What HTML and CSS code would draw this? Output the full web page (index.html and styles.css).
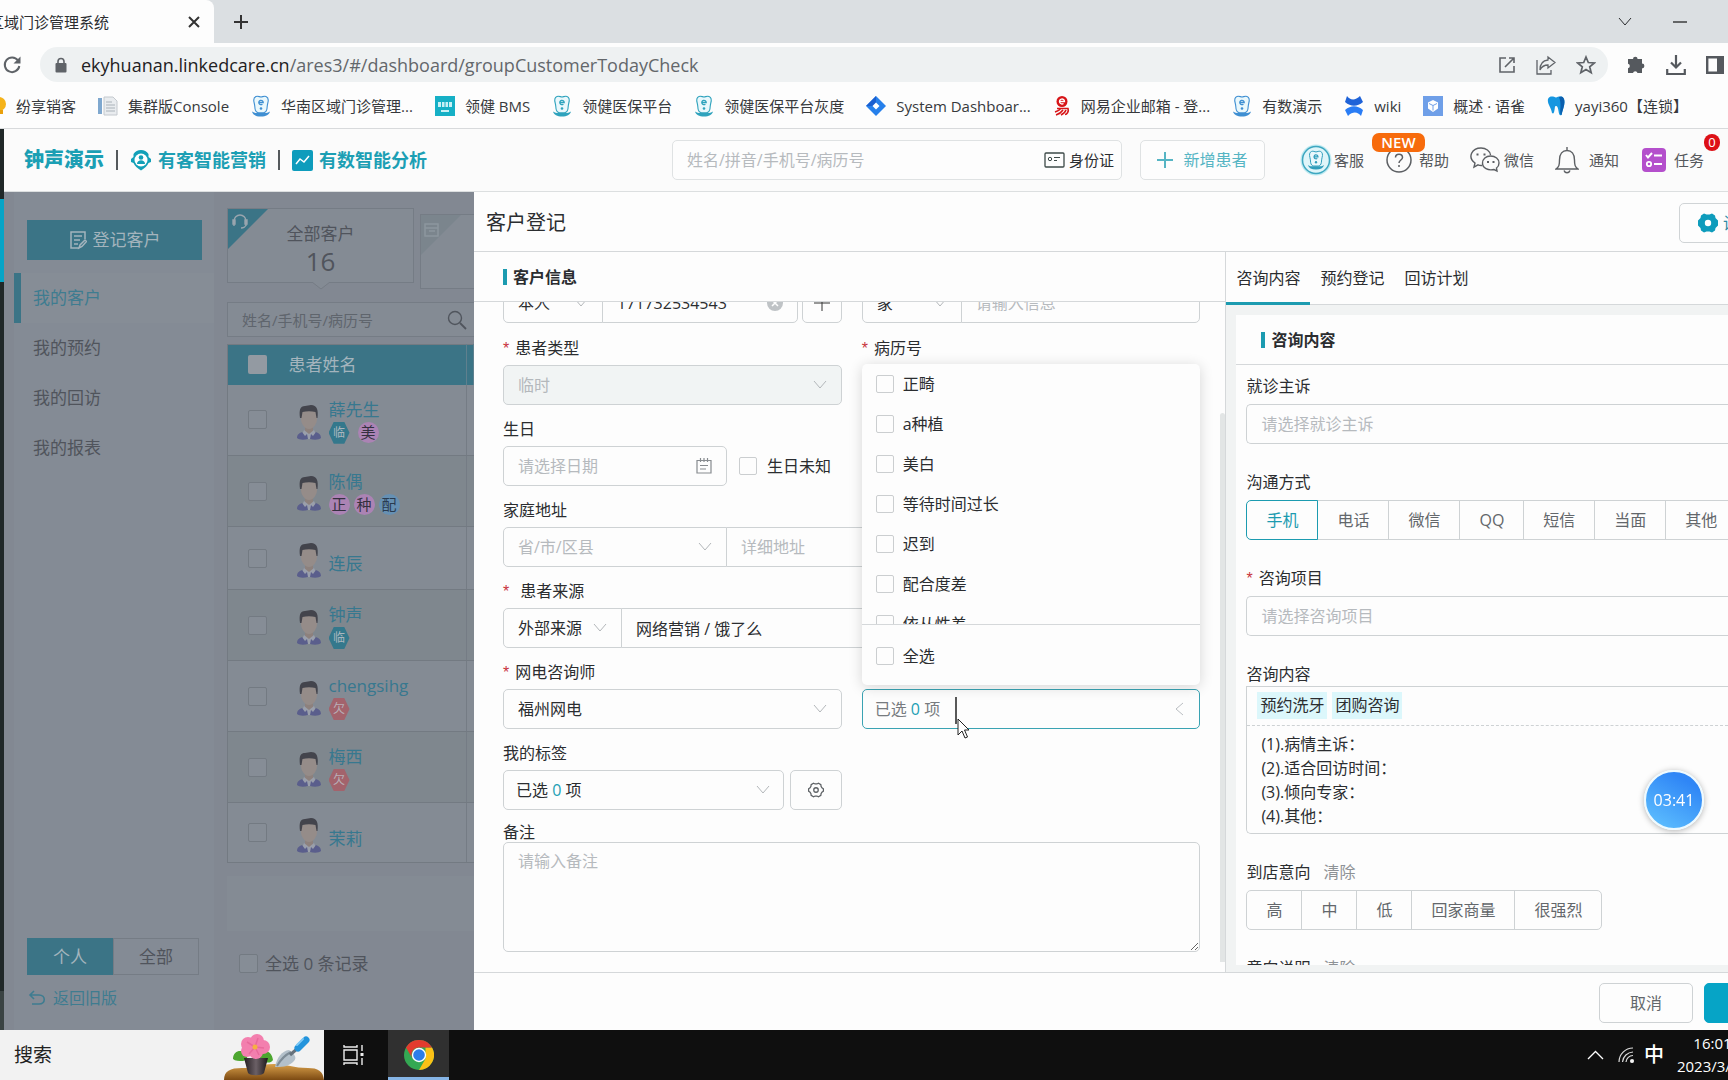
FILE: index.html
```html
<!DOCTYPE html>
<html lang="zh-CN">
<head>
<meta charset="utf-8">
<title>区域门诊管理系统</title>
<link rel="stylesheet" href="styles.css">
</head>
<body>
<svg class="defs" aria-hidden="true">
  <symbol id="chevron" viewBox="0 0 14 10"><path d="M1 1l6 7 6-7" fill="none" stroke="currentColor"/></symbol>
  <symbol id="tooth" viewBox="0 0 20 22"><path d="M5 1.500c2-.8 3.500.5 5 .5s3-1.300 5-.5c2.500 1 2.500 4 1.800 6.500-.6 2.200-.6 3.500-.8 5.500-.3 3-2 4-3.500 4.200h-5C6 17.500 4.300 16.500 4 13.500c-.2-2-.2-3.300-.8-5.500C2.500 5.500 2.500 2.500 5 1.500z" fill="#eaf8fc" stroke="currentColor" stroke-width="1.100"/><path d="M8 7.500h4.200a2.200 2.200 0 1 0-.8 1.700" fill="none" stroke="currentColor" stroke-width="1.300"/><circle cx="10" cy="13.500" r="1.300" fill="currentColor"/><path d="M1 16.500c3 2 5 1.500 9 1.500s6 .5 9-1.500c-1 3.500-4 5-9 5s-8-1.500-9-5z" fill="currentColor"/></symbol>
  <symbol id="man" viewBox="0 0 36 40"><path d="M14 25h8v6l-4 3-4-3z" fill="#8d817d"/><path d="M13 29l-4 9h18l-4-9-5 4z" fill="#9a9fab"/><path d="M6 37c0-4 3-5 5-6l3 4 2-2 1 5c-4 1-9 1-11-1zM30 37c0-4-3-5-5-6l-3 4-2-2-1 5c4 1 9 1 11-1z" fill="#5a5e8c"/><path d="M10 11c0-5 16-5 16 0v7c0 5-4 10-8 10s-8-5-8-10z" fill="#958c89"/><path d="M9 17c-1-8 0-12 5-12l6-1c6 0 7.500 5 6.500 13h-1l-1-6c-4-1-9-1-13 0l-1 6z" fill="#43444c"/></symbol>
  <symbol id="gear" viewBox="0 0 20 20"><path d="M7.300 2.500L9 3.300h2l1.700-.8 2.700 1.500.2 1.900 1 1.700 1.600 1.100v2.600l-1.600 1.100-1 1.700-.2 1.900-2.700 1.500-1.700-.8H9l-1.700.8L4.600 16l-.2-1.900-1-1.700-1.600-1.100V8.700l1.600-1.100 1-1.700.2-1.900z" fill="none" stroke="currentColor" stroke-width="1.400"/><circle cx="10" cy="10" r="2.500" fill="none" stroke="currentColor" stroke-width="1.400"/></symbol>
</svg>

<div class="tabstrip">
  <div class="tab">
    <div class="tab-title"><span>区域门诊管理系统</span></div>
    <button class="bare" aria-label="关闭标签页"><svg width="12" height="12" viewBox="0 0 12 12"><path d="M1 1l10 10M11 1L1 11" stroke="#333" stroke-width="2"/></svg></button>
  </div>
  <button class="bare new-tab" aria-label="新标签页"><svg width="16" height="16" viewBox="0 0 16 16"><path d="M8 1v14M1 8h14" stroke="#333" stroke-width="2"/></svg></button>
  <button class="bare" aria-label="搜索标签页"><svg width="14" height="10"><use href="#chevron"/></svg></button>
  <button class="bare minimize" aria-label="最小化"><svg width="14" height="10" viewBox="0 0 14 10"><path d="M0 5h14" stroke="#222" stroke-width="1.300"/></svg></button>
</div>

<div class="toolbar">
  <button class="bare" aria-label="重新加载"><svg width="20" height="20" viewBox="0 0 20 20"><path d="M16 5.500A7.300 7.300 0 1 0 17.300 11" fill="none" stroke="#5f6368" stroke-width="2"/><path d="M18.500 1.500v7h-7z" fill="#5f6368"/></svg></button>
  <div class="omnibox">
    <svg width="12" height="16" viewBox="0 0 12 16"><path d="M3 7V4.500a3 3 0 0 1 6 0V7" fill="none" stroke="#5f6368" stroke-width="1.600"/><rect x="0.500" y="6" width="11" height="9.500" rx="1" fill="#5f6368"/></svg>
    <div class="url">ekyhuanan.linkedcare.cn<span>/ares3/#/dashboard/groupCustomerTodayCheck</span></div>
    <svg width="18" height="18" viewBox="0 0 18 18" fill="none" stroke="#5f6368" stroke-width="1.600"><path d="M8 2H2v14h14v-6M11 2h5v5M16 2L7 11"/></svg>
    <svg width="20" height="20" viewBox="0 0 20 20" fill="none" stroke="#5f6368" stroke-width="1.300"><path d="M1 5v14h14v-4"/><path d="M12 2l7 5.500-7 5.500v-3c-4 0-6 1-8 5 0-6 3-9.500 8-10z"/></svg>
    <svg width="20" height="20" viewBox="0 0 20 20"><path d="M10 2l2.300 5.500 6 .5-4.600 3.800 1.500 5.900L10 14.500l-5.200 3.200 1.500-5.900L1.700 8l6-.5z" fill="none" stroke="#5f6368" stroke-width="1.700"/></svg>
  </div>
  <svg class="tool" width="20" height="20" viewBox="0 0 20 20"><path d="M7 4a2.300 2.300 0 0 1 4.600 0H16v4.600a2.300 2.300 0 0 1 0 4.800V18h-4.500a2.300 2.300 0 0 0-4.500 0H2v-4.800a2.300 2.300 0 0 0 0-4.500V4z" fill="#55595e"/></svg>
  <svg class="tool" width="20" height="20" viewBox="0 0 20 20"><path d="M10 0v12M5 7.500l5 5 5-5M1.200 14v5h17.600v-5" fill="none" stroke="#55595e" stroke-width="2.200"/></svg>
  <svg class="tool" width="18" height="18" viewBox="0 0 18 18"><path d="M1.200 1.200h15.600v15.600H1.200z" fill="none" stroke="#55595e" stroke-width="2.400"/><path d="M11 1h6v16h-6z" fill="#55595e"/></svg>
</div>

<nav class="bookmarks">
  <a href="#"><svg width="6" height="20" viewBox="10 0 6 20"><circle cx="9" cy="8" r="7" fill="#f5b31a"/><rect x="5" y="14" width="8" height="4" fill="#e9a00c"/></svg>纷享销客</a>
  <a href="#"><svg width="20" height="20" viewBox="0 0 20 20"><path d="M0 2h4v16H0z" fill="#7fa8cf"/><path d="M6 1h9l4 4v14H6z" fill="#e9ecef" stroke="#c4c9ce"/><path d="M8 6h6M8 9h9M8 12h9M8 15h9" stroke="#aab2b9"/></svg>集群版Console</a>
  <a href="#" class="blue"><svg width="20" height="22"><use href="#tooth"/></svg>华南区域门诊管理...</a>
  <a href="#"><svg width="20" height="20" viewBox="0 0 20 20"><path d="M0 0h20v20H0z" fill="#16b0c6"/><path d="M3 6h14v5H3zM6 14h8v2H6z" fill="#c9f1f6"/><path d="M6.500 6v5M10 6v5M13.500 6v5" stroke="#16b0c6"/></svg>领健 BMS</a>
  <a href="#" class="teal"><svg width="20" height="22"><use href="#tooth"/></svg>领健医保平台</a>
  <a href="#" class="teal"><svg width="20" height="22"><use href="#tooth"/></svg>领健医保平台灰度</a>
  <a href="#"><svg width="20" height="20" viewBox="0 0 20 20"><path d="M10 0l10 10-10 10L0 10z" fill="#2680eb"/><path d="M10 0v7l-3 3H0z" fill="#1a5fd0"/><path d="M10 6.500l3.500 3.500-3.500 3.500L6.500 10z" fill="#fff"/></svg>System Dashboar...</a>
  <a href="#"><svg width="18" height="20" viewBox="0 0 18 20"><circle cx="9" cy="5.500" r="5.500" fill="#d71518"/><path d="M6.500 5.500h5a2.500 2.500 0 1 0-1 2" fill="none" stroke="#fff" stroke-width="1.300"/><path d="M4 12.500h11c1 3-1 6-3 6M8 12c-1 2-3 3-6 4M10 14c-2 3-4 4-7 5M13 14c-1 3-3 4-5 5" fill="none" stroke="#d71518" stroke-width="1.600"/></svg>网易企业邮箱 - 登...</a>
  <a href="#" class="blue"><svg width="20" height="22"><use href="#tooth"/></svg>有数演示</a>
  <a href="#"><svg width="20" height="20" viewBox="0 0 20 20"><path d="M3 0c3 4 8 5 13 0l3 6c-6 5-12 5-18 0z" fill="#1f63d8"/><path d="M17 20c-3-4-8-5-13 0l-3-6c6-5 12-5 18 0z" fill="#2a7df5"/></svg>wiki</a>
  <a href="#"><svg width="20" height="20" viewBox="0 0 20 20"><path d="M0 0h20v20H0z" fill="#6f9fe8"/><path d="M10 4l5 2.500v6L10 16l-5-3.500v-6z" fill="#fff"/><path d="M6 7.500l4 2 4-2M10 9.500v5" fill="none" stroke="#6f9fe8"/></svg>概述 · 语雀</a>
  <a href="#"><svg width="18" height="20" viewBox="0 0 18 20"><path d="M1 3C3-1 7 1 9 1.500 11 1 15-1 17 3c1.500 5-1 9-2.500 16-2 1-2.500-1-3-4-.4-3-1-5-2.500-5s-1 2-1.500 4c-.5 3-1 4-2.500 3C4 11 0 8 1 3z" fill="#1596e0"/><path d="M12 1c2-1 4-1 5 2 1.500 5-1 9-2.500 16-1.500 0-1.500-3-1-8 0-4 0-6-1.500-10z" fill="#0b5fae"/></svg>yayi360【连锁】</a>
</nav>

<div class="app">
  <div class="rail"><div class="rail-top"></div><div class="rail-on"></div><div class="rail-mid"></div><div class="rail-end"></div></div>
  <div class="app-body">
    <header class="app-header">
      <div class="brand">
        <strong>钟声演示</strong><i></i>
        <a href="#"><svg width="22" height="22" viewBox="0 0 22 22"><path d="M11 1a9 9 0 0 0-7.500 4v3L1 10v3l2.500 1c1 3 4 5 7.500 7.500 3.500-2.500 6.500-4.500 7.500-7.500l2.500-1v-3l-2.500-2V5A9 9 0 0 0 11 1z" fill="#12a0b8"/><circle cx="11" cy="11" r="6.500" fill="#fff"/><circle cx="11" cy="8.500" r="2.300" fill="#12a0b8"/><path d="M7 15c0-5 8-5 8 0z" fill="#12a0b8"/></svg>有客智能营销</a><i></i>
        <a href="#"><svg width="21" height="21" viewBox="0 0 21 21"><rect width="21" height="21" rx="2" fill="#0e9cbc"/><path d="M4 14l4-5 4 3 5-6" fill="none" stroke="#fff" stroke-width="1.500"/></svg>有数智能分析</a>
      </div>
      <div class="search">
        <input type="text" placeholder="姓名/拼音/手机号/病历号" aria-label="搜索患者">
        <button class="bare"><svg width="21" height="16" viewBox="0 0 21 16"><rect x="1" y="1" width="19" height="14" rx="1" fill="none" stroke="#3d4a48" stroke-width="1.300"/><circle cx="6" cy="7" r="1.700" fill="none" stroke="#3d4a48"/><path d="M10 5.500h6M10 8.500h3" stroke="#3d4a48"/></svg>身份证</button>
      </div>
      <button class="add"><svg width="16" height="16" viewBox="0 0 16 16"><path d="M8 0v16M0 8h16" stroke="currentColor" stroke-width="2"/></svg>新增患者</button>
      <nav class="tools">
        <a href="#"><span class="tool-icon"><svg width="32" height="32" viewBox="0 0 32 32"><circle cx="16" cy="16" r="15.500" fill="#bfeaf1"/><circle cx="16" cy="16" r="13.500" fill="#dff5f9" stroke="#3ea7c0" stroke-width="1.500"/><svg x="7" y="6" width="18" height="20" color="#2f9dbb"><use href="#tooth"/></svg></svg></span>客服</a>
        <a href="#"><span class="tool-icon"><svg width="28" height="28" viewBox="0 0 28 28"><circle cx="14" cy="14" r="12" fill="none" stroke="#5c5f63" stroke-width="1.500"/><path d="M10.500 11.500c0-4.500 7-4.500 7 0 0 2.500-3.500 2.500-3.500 5.500M14 19v2" fill="none" stroke="#5c5f63" stroke-width="1.500"/></svg></span>帮助<b class="new">NEW</b></a>
        <a href="#"><span class="tool-icon"><svg width="30" height="28" viewBox="0 0 30 28" fill="none" stroke="#5c5f63" stroke-width="1.400"><path d="M12 19.500c-1.500.1-3-.2-4-.7L4 21l1-4C-3 11 2 2 11 2c5 0 9 3 9.500 7"/><path d="M20.500 10c5 0 8.500 3 8.500 7 0 2-1 4-2.500 5l.5 3-3-1.500c-6 1.500-11.500-1.500-11.500-6.500 0-4 3.500-7 8-7z"/><path d="M7.500 7.500v2M14.500 7.500v2M18 15v2M23.500 15v2" stroke-width="2"/></svg></span>微信</a>
        <a href="#"><span class="tool-icon"><svg width="24" height="28" viewBox="0 0 24 28" fill="none" stroke="#5c5f63" stroke-width="1.400"><path d="M12 1v3M1 23c3-2 3.500-4 3.500-9 0-6 3-9.500 7.500-9.500s7.500 3.500 7.500 9.500c0 5 .5 7 3.500 9z"/><path d="M9 24.500c1 3 5 3 6 0"/></svg></span>通知</a>
        <a href="#"><span class="tool-icon"><svg width="26" height="26" viewBox="0 0 26 26"><rect x="2" y="1" width="24" height="24" rx="4" fill="#b44fcc"/><path d="M6 8l2 2.500L12 6M14 8.500h8M14 17h8" fill="none" stroke="#fff" stroke-width="2"/><circle cx="9" cy="17" r="2.200" fill="none" stroke="#fff" stroke-width="1.800"/></svg></span>任务<b class="count">0</b></a>
      </nav>
    </header>

    <div class="main">
      <section class="page">
        <aside class="side">
          <button class="register"><svg width="18" height="20" viewBox="0 0 18 20" fill="none" stroke="currentColor" stroke-width="1.500"><path d="M16 9V2H2v16h8M5 6h8M5 10h6M5 14h4M10 18l1-3 5-5 1.500 1.500-4.500 5z"/></svg>登记客户</button>
          <nav class="menu">
            <a class="on" href="#">我的客户</a><a href="#">我的预约</a><a href="#">我的回访</a><a href="#">我的报表</a>
          </nav>
          <div class="scope"><button class="on">个人</button><button>全部</button></div>
          <a class="old" href="#"><svg width="18" height="16" viewBox="0 0 18 16" fill="none" stroke="currentColor" stroke-width="1.600"><path d="M6 1L2 5l4 4M2 5h9c7 0 7 9 0 9H4"/></svg>返回旧版</a>
        </aside>
        <div class="list">
          <div class="cards">
            <div class="card">
              <svg class="corner" width="40" height="40" viewBox="0 0 40 40"><path d="M0 0h40L0 40z" fill="#3b7486"/><path d="M6 17v-5a6 6 0 0 1 12 0v5M5 11v4h2v-4zM17 11v4h2v-4zM18 15c0 3-3 4-5 4" fill="none" stroke="#99a5ae" stroke-width="1.400"/></svg>
              <div class="card-name">全部客户</div><div class="card-num">16</div>
              <svg class="notch" width="18" height="8" viewBox="0 0 18 8"><path d="M0 0l9 7 9-7" fill="#848b94" stroke="#757c85"/></svg>
            </div>
            <div class="card next"><svg class="corner" width="40" height="40" viewBox="0 0 40 40"><path d="M0 0h40L0 40z" fill="#7b858d"/><path d="M4 9h13v12H4zM4 13h13M8 16h6" fill="none" stroke="#8d969e" stroke-width="1.500"/></svg></div>
          </div>
          <div class="find"><input type="text" placeholder="姓名/手机号/病历号" aria-label="查找客户"><svg width="20" height="20" viewBox="0 0 20 20"><circle cx="8" cy="8" r="6.500" fill="none" stroke="#50555d" stroke-width="1.400"/><path d="M13 13l6 6" stroke="#50555d" stroke-width="1.800"/></svg></div>
          <table class="clients">
            <colgroup><col class="c-check"><col class="c-name"><col></colgroup>
            <thead><tr><th><input type="checkbox" aria-label="选择全部"></th><th>患者姓名</th><th></th></tr></thead>
            <tbody>
              <tr class="tall"><td><input type="checkbox" aria-label="薛先生"></td><td><div class="who"><svg width="36" height="40"><use href="#man"/></svg><div><a href="#">薛先生</a><p class="wide"><b class="hex">临</b><b class="dot">美</b></p></div></div></td><td></td></tr>
              <tr class="tall alt"><td><input type="checkbox" aria-label="陈偶"></td><td><div class="who"><svg width="36" height="40"><use href="#man"/></svg><div><a href="#">陈偶</a><p><b class="dot">正</b><b class="dot">种</b><b class="dot navy">配</b></p></div></div></td><td></td></tr>
              <tr class="short"><td><input type="checkbox" aria-label="连辰"></td><td><div class="who"><svg width="36" height="40"><use href="#man"/></svg><div><a href="#">连辰</a></div></div></td><td></td></tr>
              <tr class="tall alt"><td><input type="checkbox" aria-label="钟声"></td><td><div class="who"><svg width="36" height="40"><use href="#man"/></svg><div><a href="#">钟声</a><p><b class="hex">临</b></p></div></div></td><td></td></tr>
              <tr class="tall"><td><input type="checkbox" aria-label="chengsihg"></td><td><div class="who"><svg width="36" height="40"><use href="#man"/></svg><div><a href="#">chengsihg</a><p><b class="hex owe">欠</b></p></div></div></td><td></td></tr>
              <tr class="tall alt"><td><input type="checkbox" aria-label="梅西"></td><td><div class="who"><svg width="36" height="40"><use href="#man"/></svg><div><a href="#">梅西</a><p><b class="hex owe">欠</b></p></div></div></td><td></td></tr>
              <tr class="short last"><td><input type="checkbox" aria-label="茉莉"></td><td><div class="who"><svg width="36" height="40"><use href="#man"/></svg><div><a href="#">茉莉</a></div></div></td><td></td></tr>
            </tbody>
          </table>
          <div class="list-blank"></div>
          <label class="list-foot"><input type="checkbox">全选 0 条记录</label>
        </div>
      </section>

      <section class="drawer">
        <div class="drawer-head"><h1>客户登记</h1><button class="setting"><svg width="20" height="20" viewBox="0 0 20 20"><path d="M6 .5l2.500 1h3L14 .5l3 2 .5 2.500L20 7.500v5L17.500 15l-.5 2.500-3 2-2.500-1h-3l-2.500 1-3-2L2.500 15 0 12.500v-5L2.500 5 3 2.500z" fill="#0e9cbc"/><circle cx="10" cy="10" r="3.200" fill="#fff"/></svg>设置</button></div>
        <div class="drawer-body">
          <div class="left">
            <h2 class="left-title">客户信息</h2>
            <div class="scroll">
              <form class="form">
                <div class="pair first">
                  <div class="line">
                    <div class="joined grow">
                      <div class="select w100"><select aria-label="电话归属"><option>本人</option></select><svg width="14" height="10"><use href="#chevron"/></svg></div>
                      <div class="select grow"><input type="text" value="171732534543" aria-label="电话"><svg width="16" height="16" viewBox="0 0 16 16"><circle cx="8" cy="8" r="8" fill="#bfc3c6"/><path d="M5 5l6 6M11 5l-6 6" stroke="#fff" stroke-width="1.500"/></svg></div>
                    </div>
                    <button type="button" class="btn w40" aria-label="添加"><svg width="16" height="16" viewBox="0 0 16 16"><path d="M8 0v16M0 8h16" stroke="#333"/></svg></button>
                  </div>
                  <div class="joined">
                    <div class="select w100"><select aria-label="联系方式"><option>家</option></select><svg width="14" height="10"><use href="#chevron"/></svg></div>
                    <input class="grow" type="text" placeholder="请输入信息" aria-label="联系信息">
                  </div>
                </div>
                <div class="pair">
                  <div class="field"><label class="req" for="f-type">患者类型</label><div class="select"><select id="f-type" disabled><option>临时</option></select><svg width="14" height="10"><use href="#chevron"/></svg></div></div>
                  <div class="field"><label class="req" for="f-no">病历号</label><input id="f-no" type="text"></div>
                </div>
                <div class="pair">
                  <div class="field"><label for="f-birth">生日</label><div class="line birth">
                    <div class="select date w224"><input id="f-birth" type="text" placeholder="请选择日期"><svg width="16" height="16" viewBox="0 0 16 16" fill="none" stroke="#878b8f" stroke-width="1.200"><path d="M1 2.500h14v12.500H1zM4.500 0v4M8 0v4M11.500 0v4M4 7.500h8M4 11h6"/></svg></div>
                    <label class="tick"><input type="checkbox">生日未知</label></div></div>
                  <div></div>
                </div>
                <div class="field"><label for="f-addr">家庭地址</label><div class="joined"><div class="select w224"><input id="f-addr" type="text" placeholder="省/市/区县"><svg width="14" height="10"><use href="#chevron"/></svg></div><input class="grow" type="text" placeholder="详细地址" aria-label="详细地址"></div></div>
                <div class="field"><label class="req loose" for="f-src">患者来源</label><div class="joined"><div class="select w119"><select id="f-src"><option>外部来源</option></select><svg width="14" height="10"><use href="#chevron"/></svg></div><input class="grow" type="text" value="网络营销 / 饿了么" aria-label="来源明细"></div></div>
                <div class="pair">
                  <div class="field"><label class="req" for="f-con">网电咨询师</label><div class="select"><select id="f-con"><option>福州网电</option></select><svg width="14" height="10"><use href="#chevron"/></svg></div></div>
                  <div class="field end"><div class="multi">
                    <button type="button" class="btn pick focus"><span>已选 <em>0</em> 项</span><svg width="10" height="14" viewBox="0 0 10 14"><path d="M9 1L2 7l7 6" fill="none" stroke="#babec2"/></svg></button>
                    <svg class="pointer" width="14" height="43" viewBox="0 0 14 43"><path d="M1 0v27" stroke="#222" stroke-width="1.500"/><path d="M3 22v16l4-4 3 7 2.500-1-3-7H14z" fill="#fff" stroke="#222"/></svg>
                    <div class="menu-pop">
                      <div class="options">
                        <label><input type="checkbox">正畸</label><label><input type="checkbox">a种植</label><label><input type="checkbox">美白</label><label><input type="checkbox">等待时间过长</label><label><input type="checkbox">迟到</label><label><input type="checkbox">配合度差</label><label><input type="checkbox">依从性差</label>
                      </div>
                      <label class="all"><input type="checkbox">全选</label>
                    </div>
                  </div></div>
                </div>
                <div class="pair">
                  <div class="field"><span class="cap">我的标签</span><div class="line tight"><button type="button" class="btn pick grow"><span>已选 <em>0</em> 项</span><svg width="14" height="10"><use href="#chevron"/></svg></button><button type="button" class="btn w52" aria-label="标签设置"><svg width="18" height="18"><use href="#gear"/></svg></button></div></div>
                  <div></div>
                </div>
                <div class="field memo"><label for="f-memo">备注</label><textarea id="f-memo" placeholder="请输入备注"></textarea></div>
              </form>
              <div class="track"><div class="thumb"></div></div>
            </div>
          </div>
          <div class="right">
            <nav class="tabs"><a class="on" href="#">咨询内容</a><a href="#">预约登记</a><a href="#">回访计划</a></nav>
            <div class="right-scroll">
              <div class="sheet">
                <h2 class="sheet-title">咨询内容</h2>
                <div class="items">
                  <div class="item"><label for="c-chief">就诊主诉</label><input id="c-chief" type="text" placeholder="请选择就诊主诉"></div>
                  <div class="item"><span class="cap">沟通方式</span><div class="radios"><button class="on">手机</button><button>电话</button><button>微信</button><button>QQ</button><button>短信</button><button>当面</button><button>其他</button></div></div>
                  <div class="item"><label class="req" for="c-proj">咨询项目</label><input id="c-proj" type="text" placeholder="请选择咨询项目"></div>
                  <div class="item note"><label for="c-note">咨询内容</label>
                    <div class="note-box"><div class="tags"><button>预约洗牙</button><button>团购咨询</button></div><textarea id="c-note">(1).病情主诉：
(2).适合回访时间：
(3).倾向专家：
(4).其他：</textarea></div></div>
                  <div class="item"><span class="cap">到店意向<a href="#">清除</a></span><div class="radios"><button>高</button><button>中</button><button>低</button><button>回家商量</button><button>很强烈</button></div></div>
                  <div class="item"><span class="cap">意向说明<a href="#">清除</a></span></div>
                </div>
              </div>
            </div>
          </div>
        </div>
        <div class="drawer-foot"><button class="btn cancel">取消</button><button class="btn save" aria-label="保存"></button></div>
        <div class="timer">03:41</div>
      </section>
    </div>
  </div>
</div>

<footer class="taskbar">
  <div class="task-search"><span>搜索</span>
    <svg width="100" height="46" viewBox="0 0 100 46">
      <defs><linearGradient id="soil" x2="0" y2="1"><stop offset="0" stop-color="#d9a04a"/><stop offset="1" stop-color="#7c4a12"/></linearGradient><linearGradient id="pot"><stop offset="0" stop-color="#241d20"/><stop offset=".5" stop-color="#6b6066"/><stop offset="1" stop-color="#1d181a"/></linearGradient></defs>
      <path d="M0 46c0-9 6-12 18-12 12 0 20-4 32-4 12 0 20 4 34 4 10 0 15 3 16 12z" fill="url(#soil)"/>
      <path d="M9 25c0-8 8-10 12-6 4 4 2 8-2 8s-8 0-10-2zM49 26c-1-7-6-11-11-8-4 3-2 9 2 10s7 1 9-2z" fill="#4ca62f"/>
      <path d="M20 24h24l-4 15c-2 3-14 3-16 0z" fill="url(#pot)"/>
      <g fill="#f37fae"><circle cx="24" cy="10" r="7"/><circle cx="33" cy="7" r="7"/><circle cx="39" cy="13" r="7"/><circle cx="32" cy="18" r="7"/><circle cx="23" cy="17" r="6"/></g><path d="M31 13l-8-5M31 13l3-9M31 13l9 1M31 13l-6 7M31 13l4 8" stroke="#e86a9c" stroke-width="1.500"/><circle cx="31" cy="13" r="2.500" fill="#f5b042"/>
      <path d="M51 33c2-10 7-16 14-17 6 4 8 8 5 11-5 5-9 6-19 6z" fill="#b3c0ca"/><path d="M53 32c4-7 8-11 14-14" stroke="#7e8c97" stroke-width="2" fill="none"/><path d="M66 21l8-7" stroke="#66727c" stroke-width="3"/><path d="M74 14l8-8" stroke="#2394dc" stroke-width="7" stroke-linecap="round"/><path d="M73 11l6-6" stroke="#7cc8f5" stroke-width="2" stroke-linecap="round"/>
    </svg></div>
  <button class="task view" aria-label="任务视图"><svg width="22" height="20" viewBox="0 0 22 20" fill="none" stroke="#eee" stroke-width="1.400"><path d="M1 5h13v10H1zM1 0v2h13V0M1 20v-2h13v2M19 0v6M19 13v7"/><path d="M17.500 8h3v3h-3z" fill="#eee" stroke="none"/></svg></button>
  <button class="task chrome" aria-label="Chrome"><svg width="30" height="30" viewBox="0 0 30 30"><circle cx="15" cy="15" r="15" fill="#34a853"/><path d="M28 7.500A15 15 0 0 1 15 30l6.500-11.300V7.500z" fill="#fbc116"/><path d="M2 7.500A15 15 0 0 1 28 7.500H15a7.500 7.500 0 0 0-6.500 11.300z" fill="#e33b2e"/><circle cx="15" cy="15" r="7.200" fill="#fff"/><circle cx="15" cy="15" r="5.800" fill="#2b7de9"/></svg></button>
  <div class="tray">
    <svg width="17" height="10" viewBox="0 0 17 10"><path d="M1 9l7.500-7.500L16 9" fill="none" stroke="#fff" stroke-width="1.300"/></svg>
    <svg class="wifi" width="16" height="16" viewBox="0 0 16 16" fill="none" stroke="#ddd" stroke-width="1.200"><path d="M1 15A14 14 0 0 1 15 1M4.500 15A11 11 0 0 1 15 5M8 15a7 7 0 0 1 7-6.500"/><circle cx="14" cy="14" r="1.500" fill="#fff"/></svg>
    <span class="ime">中</span>
    <time>16:01<br>2023/3/22</time>
  </div>
</footer>
</body>
</html>
```
FILE: styles.css
```css
* { box-sizing: border-box; margin: 0; padding: 0; }
body { height: 100vh; display: flex; flex-direction: column; overflow: hidden; background: #fdfdfd; color: #2b2d30; font: 16px/24px "Open Sans", "Noto Sans CJK SC", sans-serif; }
a { color: inherit; text-decoration: none; }
button, input, select, textarea { font: inherit; color: inherit; }
svg { flex: none; display: block; }
.defs { position: absolute; width: 0; height: 0; }
.bare { border: 0; background: none; display: flex; align-items: center; }
.grow { flex: 1; min-width: 0; }

/* browser window */
.tabstrip { flex: none; height: 43px; background: #dbdfe2; display: flex; align-items: center; }
.tab { width: 214px; height: 43px; background: #fdfdfd; border-radius: 0 8px 0 0; display: flex; align-items: center; justify-content: space-between; padding-right: 14px; }
.tab-title { width: 109px; overflow: hidden; display: flex; justify-content: flex-end; white-space: nowrap; font-size: 15px; }
.new-tab { margin: 0 auto 0 19px; }
.minimize { margin: 0 41px; }
.toolbar { flex: none; height: 45px; display: flex; align-items: center; padding: 0 10px 2px 2px; }
.omnibox { flex: 1; height: 35px; margin-left: 18px; margin-right: 18px; border-radius: 18px; background: #eef1f2; display: flex; align-items: center; gap: 20px; padding: 0 12px 0 15px; }
.url { flex: 1; margin-left: -6px; font-size: 18px; color: #1f2123; white-space: nowrap; }
.url span { color: #63676b; }
.tool { margin-right: 20px; }
.tool:last-child { margin-right: -6px; }
.bookmarks { flex: none; height: 41px; border-bottom: 1px solid #d8dadc; display: flex; align-items: center; gap: 22px; padding-bottom: 4px; font-size: 15px; white-space: nowrap; overflow: hidden; color: #37393c; }
.bookmarks a { display: flex; align-items: center; gap: 10px; }
.bookmarks .blue svg { color: #3f8fd2; }
.bookmarks .teal svg { color: #2fa3bd; }

/* application frame */
.app { flex: 1; min-height: 0; display: flex; }
.rail { width: 4px; display: flex; flex-direction: column; background: #202828; }
.rail-top { height: 70px; }
.rail-on { height: 83px; background: #06a4c6; }
.rail-mid { flex: 1; }
.rail-end { height: 39px; background: #3a4343; }
.app-body { flex: 1; min-width: 0; display: flex; flex-direction: column; }
.app-header { flex: none; height: 63px; border-bottom: 1px solid #dcdfe0; background: #fbfbfb; display: flex; align-items: center; padding: 0 24px 0 20px; white-space: nowrap; }
.brand { flex: 1; display: flex; align-items: center; gap: 12px; color: #1c9fb4; font-size: 18px; font-weight: 700; }
.brand strong { font-size: 20px; }
.brand a { display: flex; align-items: center; gap: 6px; }
.brand i { width: 2px; height: 20px; background: #55595c; }
.search { width: 450px; height: 40px; border: 1px solid #dfe2e3; border-radius: 5px; background: #fdfdfd; display: flex; align-items: center; padding: 0 7px 0 14px; }
.search input { flex: 1; min-width: 0; border: 0; outline: 0; background: none; }
.search button { gap: 4px; font-size: 15px; }
::placeholder { color: #b6babe; opacity: 1; }
.add { width: 125px; height: 40px; margin-left: 18px; margin-right: 35px; border: 1px solid #dfe2e3; border-radius: 5px; background: #fdfdfd; color: #56b5c4; display: flex; align-items: center; justify-content: center; gap: 10px; }
.tools { display: flex; gap: 21px; font-size: 15px; color: #55585c; }
.tools a { position: relative; display: flex; align-items: center; height: 40px; }
.tool-icon { width: 34px; }
.new { position: absolute; left: -13px; top: -7px; width: 53px; height: 19px; border-radius: 7px; background: #f76b0c; color: #fff; font-size: 15px; font-weight: 600; line-height: 19px; text-align: center; }
.count { position: absolute; right: -16px; top: -6px; width: 16px; height: 17px; border-radius: 8px; background: #dd1016; color: #fff; font-size: 13px; font-weight: 400; line-height: 17px; text-align: center; }
.main { flex: 1; min-height: 0; display: flex; }

/* dimmed customer list */
.page { width: 470px; overflow: hidden; background: #828892; display: flex; gap: 13px; padding-left: 10px; color: #50545c; font-size: 17px; }
.side { width: 200px; display: flex; flex-direction: column; background: #848b95; padding: 28px 0 20px; }
.register { height: 40px; margin: 0 12px 13px 13px; border: 0; background: #3b7486; color: #a4b4bd; display: flex; align-items: center; justify-content: center; gap: 6px; }
.menu { display: flex; flex-direction: column; flex: 1; }
.menu a { height: 50px; line-height: 50px; padding-left: 19px; }
.menu .on { border-left: 7px solid #3b7486; padding-left: 12px; background: #868d96; color: #3e7c90; }
.scope { display: flex; margin: 0 15px 11px 13px; }
.scope button { flex: 1; height: 37px; border: 1px solid #757c85; background: none; }
.scope .on { border-color: #3b7486; background: #3b7486; color: #a4b4bd; }
.old { display: flex; align-items: center; gap: 7px; margin-left: 14px; color: #3e7c90; font-size: 16px; }
.list { flex: 1; min-width: 0; display: flex; flex-direction: column; padding-top: 16px; }
.cards { display: flex; gap: 6px; height: 94px; }
.card { position: relative; flex: none; width: 187px; height: 75px; border: 1px solid #757c85; background: #848b94; text-align: center; padding-top: 13px; }
.card.next { margin-top: 6px; }
.corner { position: absolute; left: 0; top: 0; }
.notch { position: absolute; left: 84px; top: 73px; }
.card-num { font-size: 26px; line-height: 30px; }
.find { flex: none; height: 35px; margin-bottom: 7px; border: 1px solid #757c85; border-right: 0; background: #848b94; display: flex; align-items: center; padding: 0 7px 0 14px; font-size: 15px; }
.find input { flex: 1; min-width: 0; border: 0; background: none; }
.find ::placeholder { color: #5f656d; }
input[type=checkbox] { appearance: none; flex: none; width: 18px; height: 18px; border: 1px solid #cbced0; border-radius: 2px; background: #fdfdfd; }
.page input[type=checkbox] { display: block; width: 19px; height: 19px; border-color: #737a82; background: #868d96; }
.clients { table-layout: fixed; width: 100%; border-collapse: collapse; border: 1px solid #737a82; border-right: 0; background: #848b94; }
.c-check { width: 61px; }
.c-name { width: 178px; }
.clients th { height: 40px; background: #3b7486; color: #a4b4bd; font-weight: 400; text-align: left; border-right: 1px solid #5f808e; }
.clients th:first-child { border-right: 0; }
.clients th:first-child, .clients td:first-child { padding-left: 20px; }
.clients th input[type=checkbox] { border: 0; background: #939aa2; }
.clients td { border-bottom: 1px solid #737a82; }
.clients td:nth-child(2) { border-right: 1px solid #757c85; }
.tall { height: 71px; }
.short { height: 63px; }
.short.last { height: 60px; }
.alt { background: #7f878e; }
.who { display: flex; align-items: center; gap: 2px; padding: 2px 0 0 2px; color: #37788f; }
.who a { display: block; line-height: 24px; }
.short .who a { padding-top: 10px; }
.who p { display: flex; gap: 4px; }
.who .wide { gap: 8px; }
.who b { width: 21px; height: 21px; border-radius: 50%; font-size: 15px; font-weight: 400; line-height: 21px; text-align: center; }
.dot { background: #ab83b4; color: #34303f; }
.dot.navy { background: #6690b3; color: #2a3b50; }
.who .hex { height: 22px; border-radius: 0; clip-path: polygon(25% 0, 75% 0, 100% 50%, 75% 100%, 25% 100%, 0 50%); background: #34788c; color: #a9b6be; font-size: 12px; }
.who .owe { background: #a3636c; color: #b9b0b8; }
.list-blank { flex: 1; margin-top: 13px; background: #848b94; }
.list-foot { flex: none; height: 99px; display: flex; align-items: center; gap: 7px; padding: 0 0 34px 12px; }

/* drawer */
.drawer { position: relative; flex: 1; min-width: 0; display: flex; flex-direction: column; background: #fdfdfd; }
.drawer-head { flex: none; height: 60px; border-bottom: 1px solid #d5d8da; display: flex; align-items: center; justify-content: space-between; padding: 2px 0 0 12px; overflow: hidden; }
h1 { font-size: 20px; font-weight: 400; }
.setting { flex: none; width: 105px; height: 40px; margin-right: -56px; border: 1px solid #d0d4d6; border-radius: 5px; background: none; color: #2f8ba6; display: flex; align-items: center; gap: 5px; padding-left: 18px; }
.drawer-body { flex: 1; min-height: 0; display: flex; }
.left { width: 60%; display: flex; flex-direction: column; border-right: 1px solid #d5d8da; }
h2 { font-size: 16px; line-height: 16px; font-weight: 700; border-left: 4px solid #1c9bb0; padding-left: 6px; }
.left-title { margin: 17px 0 16px 29px; }
.scroll { position: relative; flex: 1; min-height: 0; overflow: hidden; display: flex; flex-direction: column; justify-content: flex-end; border-top: 1px solid #d5d8da; padding: 0 25px 20px 29px; }
.track { position: absolute; right: 0; top: 111px; bottom: 10px; width: 5px; }
.thumb { height: 100%; border-radius: 3px 3px 0 0; background: #e2e5e5; }
.form { display: flex; flex-direction: column; gap: 12px; }
.pair { display: grid; grid-template-columns: 1fr 1fr; column-gap: 20px; }
.pair.first { margin-bottom: 1px; }
.field { display: flex; flex-direction: column; gap: 5px; }
.field.end { justify-content: flex-end; }
.field > label, .cap, .item > label { height: 24px; }
.req::before { content: "*"; color: #c8343c; margin-right: 6px; font-family: "Liberation Sans", sans-serif; line-height: 1; }
.req.loose::before { margin-right: 11px; }
.line { display: flex; gap: 4px; }
.line.tight { gap: 6px; }
.line.birth { gap: 12px; }
.joined { display: flex; }
.joined > * + * { margin-left: -1px; }
.w100 { width: 100px; }
.w119 { width: 119px; }
.w224 { width: 224px; }
.form input[type=text], .form select, .item > input, .btn { width: 100%; min-width: 0; height: 40px; border: 1px solid #ced2d4; border-radius: 5px; background: #fdfdfd; padding: 0 14px; appearance: none; }
.form .joined > :first-child > :first-child { border-radius: 5px 0 0 5px; }
.form .joined > input:last-child, .form .joined > :last-child > input { border-radius: 0 5px 5px 0; }
.form select:disabled { background: #f1f4f4; color: #b4b8bc; opacity: 1; }
.form .btn { width: auto; display: flex; align-items: center; justify-content: center; padding: 0; color: #5c6064; }
.form .w40 { width: 40px; }
.form .w52 { width: 52px; }
.form .joined > input.grow { width: auto; }
.select { display: grid; align-items: center; }
.select > * { grid-area: 1 / 1; }
.select svg { justify-self: end; margin-right: 15px; color: #b3b7ba; pointer-events: none; }
.tick { display: flex; align-items: center; gap: 10px; }
.multi { position: relative; }
.form .pick { justify-content: space-between; padding: 0 13px 0 12px; color: #2b2d30; }
.pick em { font-style: normal; color: #1c9fb4; }
.pick svg { color: #b3b7ba; }
.form .focus { width: 100%; padding-right: 15px; border-color: #3aa3b3; color: #777b7f; }
.pointer { position: absolute; left: 93px; top: 8px; z-index: 2; }
.menu-pop { position: absolute; left: 0; right: 0; bottom: 44px; border-radius: 5px; background: #fdfdfd; box-shadow: 0 2px 14px rgba(0, 0, 0, 0.16); }
.options { height: 261px; overflow: hidden; border-bottom: 1px solid #d5d8da; }
.menu-pop label { display: flex; align-items: center; gap: 9px; height: 40px; padding-left: 14px; }
.menu-pop .all { height: 60px; padding-top: 2px; }
.field.memo { gap: 0; }
.memo > label { height: 20px; line-height: 20px; }
textarea { display: block; border: 1px solid #ced2d4; border-radius: 5px; background: #fdfdfd; }
.memo textarea { width: 100%; height: 110px; padding: 6px 14px; }

/* consultation panel */
.right { flex: 1; min-width: 0; display: flex; flex-direction: column; background: #f1f3f3; }
.tabs { flex: none; height: 53px; display: flex; border-bottom: 1px solid #d5d8da; background: #fdfdfd; }
.tabs a { height: 53px; line-height: 53px; padding: 0 10px; border-bottom: 3px solid transparent; }
.tabs .on { border-color: #1c9bb0; }
.right-scroll { flex: 1; min-height: 0; overflow: hidden; margin: 10px 0 7px 10px; background: #fdfdfd; }
.sheet-title { margin: 17px 0 16px 25px; }
.items { border-top: 1px solid #d5d8da; padding: 9px 0 0 10px; display: flex; flex-direction: column; gap: 26px; }
.item { display: flex; flex-direction: column; gap: 6px; }
.item > input { border-right: 0; border-radius: 5px 0 0 5px; }
.radios { display: flex; }
.radios button { flex: none; height: 40px; padding: 0 19px; margin-left: -1px; border: 1px solid #ced2d4; background: none; color: #63676b; }
.radios button:first-child { margin-left: 0; border-radius: 5px 0 0 5px; }
.radios button:last-child { border-radius: 0 5px 5px 0; }
.radios .on { position: relative; border-color: #1c9bb0; color: #1c9bb0; }
.cap a { margin-left: 13px; color: #8e9296; }
.item.note { gap: 0; }
.note-box { border: 1px solid #ced2d4; border-right: 0; border-radius: 0 0 0 5px; }
.tags { height: 39px; display: flex; align-items: center; gap: 5px; padding: 0 0 2px 10px; border-bottom: 1px dashed #ced2d4; }
.tags button { height: 27px; border: 0; background: #dcf7fb; padding: 0 3px; }
.note textarea { width: 100%; height: 107px; padding: 6px 14px; border: 0; resize: none; }
.drawer-foot { flex: none; height: 58px; border-top: 1px solid #d5d8da; display: flex; justify-content: flex-end; gap: 11px; padding-top: 10px; overflow: hidden; }
.drawer-foot .btn { flex: none; width: 94px; color: #63676b; }
.drawer-foot .save { margin-right: -70px; border-color: #06a4c6; background: #06a4c6; }
.timer { position: absolute; right: 24px; bottom: 200px; width: 60px; height: 60px; border: 2px solid #eefaff; border-radius: 50%; background: linear-gradient(30deg, #62c4ff, #2f86f6 80%); box-shadow: 0 1px 6px rgba(0, 0, 0, 0.3); color: #fff; line-height: 56px; text-align: center; }

/* windows taskbar */
.taskbar { flex: none; height: 50px; background: #0f0f0f; display: flex; color: #fff; }
.task-search { width: 324px; background: #f2f2f2; color: #222; font-size: 19px; display: flex; align-items: center; justify-content: space-between; padding-left: 14px; }
.task-search svg { align-self: flex-end; }
.task { height: 50px; border: 0; background: none; display: flex; align-items: center; justify-content: center; }
.view { width: 64px; padding-right: 4px; }
.chrome { width: 61px; background: #303030; border-bottom: 3px solid #86b5e6; padding-top: 3px; }
.tray { margin-left: auto; display: flex; align-items: center; }
.wifi { margin: 0 10px 0 14px; }
.ime { font-size: 20px; font-weight: 500; }
.tray time { font-size: 15px; line-height: 23px; text-align: center; margin: 0 -20px 0 13px; white-space: nowrap; }
```
